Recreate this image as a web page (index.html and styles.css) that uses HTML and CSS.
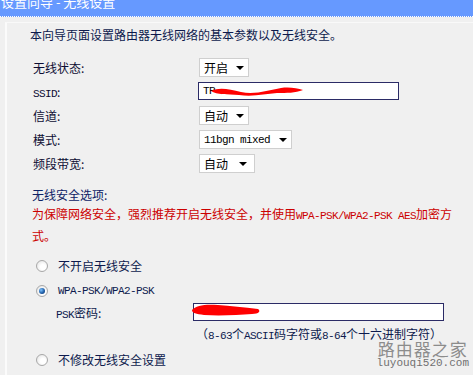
FILE: index.html
```html
<!DOCTYPE html>
<html lang="zh-CN">
<head>
    <meta charset="UTF-8">
    <title>设置向导 - 无线设置</title>
    <link rel="stylesheet" href="styles.css">
</head>
<body>
    <div class="title-bar">
        <div class="title">设置向导 - 无线设置</div>
    </div>

    <div class="panel">
        <p class="intro">本向导页面设置路由器无线网络的基本参数以及无线安全。</p>

        <div class="form-grid">
            <div class="label">无线状态:</div>
            <div><span class="sel w50">开启<i class="arrow"></i></span></div>

            <div class="label"><span class="en">SSID</span>:</div>
            <div>
                <span class="text-input ssid">
                    <span class="en">TP</span>
                    <svg class="scribble ssid-mark" width="96" height="14" viewBox="0 0 96 14">
                        <path d="M2 7 C10 3 20 5 32 8 C46 11 60 6 72 4 C80 3 88 4 94 6 C86 9 78 9 68 9 C56 10 44 13 30 11 C18 10 8 11 2 7 Z" fill="#ff0000"/>
                    </svg>
                </span>
            </div>

            <div class="label">信道:</div>
            <div><span class="sel w50">自动<i class="arrow"></i></span></div>

            <div class="label">模式:</div>
            <div><span class="sel w93"><span class="en">11bgn mixed</span><i class="arrow"></i></span></div>

            <div class="label">频段带宽:</div>
            <div><span class="sel w56">自动<i class="arrow"></i></span></div>
        </div>

        <div class="sec-title">无线安全选项:</div>
        <p class="warn">为保障网络安全，强烈推荐开启无线安全，并使用<span class="en">WPA-PSK/WPA2-PSK AES</span>加密方<br>式。</p>

        <div class="radio-row"><span class="radio"></span>不开启无线安全</div>
        <div class="radio-row"><span class="radio on"></span><span class="en">WPA-PSK/WPA2-PSK</span></div>
        <div class="psk-row">
            <div class="psk-label"><span class="en">PSK</span>密码:</div>
            <span class="text-input psk">
                <svg class="scribble psk-mark" width="72" height="16" viewBox="0 0 72 16">
                    <path d="M2 8 C6 3 16 2 28 3 C40 4 54 5 68 7 C71 9 69 12 62 12 C48 13 30 14 14 13 C6 12 2 11 2 8 Z" fill="#ff0000"/>
                </svg>
            </span>
        </div>
        <div class="hint">（<span class="en">8-63</span>个<span class="en">ASCII</span>码字符或<span class="en">8-64</span>个十六进制字符）</div>
        <div class="radio-row"><span class="radio"></span>不修改无线安全设置</div>

        <div class="watermark">
            <div class="wm-cn">路由器之家</div>
            <div class="wm-en">luyouqi520.com</div>
        </div>
    </div>
</body>
</html>
```

FILE: styles.css
```css
* {
    margin: 0;
    padding: 0;
    box-sizing: border-box;
}

body {
    background: #f0f0f0;
    color: #0d1a4d;
    font-family: 'Noto Sans CJK SC', 'Liberation Sans', sans-serif;
    font-size: 12px;
    width: 473px;
    height: 375px;
    overflow: hidden;
}

.en {
    font-family: 'Liberation Mono', monospace;
    font-size: 11px;
    letter-spacing: -0.6px;
}

.title-bar {
    height: 17px;
    background: #6699ff;
    border-bottom: 1px dotted #ffffff;
    overflow: hidden;
}

.title {
    color: #ffffff;
    font-size: 13px;
    line-height: 14px;
    margin-top: -5px;
    padding-left: 1px;
}

.panel {
    position: relative;
    margin-top: 5px;
    margin-left: 5px;
    height: 353px;
    border-left: 2px solid #fbfbfb;
    border-top: 1px solid #f9f9f9;
    padding-left: 25px;
    padding-top: 3px;
}

.intro {
    margin-left: -2px;
    line-height: 18px;
}

.form-grid {
    display: grid;
    grid-template-columns: 166px auto;
    grid-auto-rows: 24px;
    align-items: center;
    margin-top: 11px;
    margin-left: 1px;
}

.label {
    color: #0d0d33;
}

.sel {
    display: inline-flex;
    align-items: center;
    justify-content: space-between;
    height: 19px;
    background: #ffffff;
    border: 1px solid #cfcfcf;
    padding: 0 4px 0 4px;
    color: #000000;
    vertical-align: middle;
}

.w50 { width: 50px; }
.w56 { width: 56px; padding-right: 7px; }
.w93 { width: 93px; }

.arrow {
    width: 0;
    height: 0;
    border-left: 4px solid transparent;
    border-right: 4px solid transparent;
    border-top: 4px solid #000000;
}

.text-input {
    position: relative;
    display: flex;
    align-items: center;
    background: #ffffff;
    border: 1px solid #2b2b66;
    color: #000000;
    padding-left: 4px;
}

.ssid {
    width: 201px;
    height: 18px;
    margin-left: -1px;
}

.psk {
    width: 251px;
    height: 18px;
}

.scribble {
    position: absolute;
}

.ssid-mark {
    left: 10px;
    top: 1px;
}

.psk-mark {
    left: -4px;
    top: -2px;
}

.sec-title {
    margin-top: 10px;
    line-height: 19px;
    color: #0d2266;
}

.warn {
    color: #cc0000;
    line-height: 19px;
}

.radio-row {
    display: flex;
    align-items: center;
    gap: 10px;
    height: 25px;
    padding-left: 4px;
    color: #0d1a4d;
}

.warn + .radio-row {
    margin-top: 8px;
}

.radio {
    width: 12px;
    height: 12px;
    border-radius: 50%;
    border: 1px solid #a8a8a8;
    background: radial-gradient(circle at 60% 60%, #ffffff 30%, #dedede 100%);
    position: relative;
}

.radio.on::after {
    content: '';
    position: absolute;
    left: 2px;
    top: 2px;
    width: 6px;
    height: 6px;
    border-radius: 50%;
    background: radial-gradient(circle at 35% 35%, #7fc3ff 0%, #1f5fa8 55%, #0c2f66 100%);
}

.psk-row {
    display: flex;
    align-items: center;
    height: 18px;
}

.psk-label {
    width: 161px;
    padding-left: 24px;
    color: #0d1a4d;
}

.hint {
    margin-top: 4px;
    margin-left: 164px;
    line-height: 18px;
    color: #0d1a4d;
}

.hint + .radio-row {
    margin-top: 2px;
}

.watermark {
    position: absolute;
    right: 4px;
    bottom: 6px;
    text-align: center;
    color: #8c8c8c;
}

.wm-cn {
    font-family: 'Noto Sans CJK SC', sans-serif;
    font-size: 17px;
    line-height: 17px;
    letter-spacing: 1px;
}

.wm-en {
    font-family: 'Liberation Mono', monospace;
    font-size: 11px;
    line-height: 12px;
    color: #707070;
}
```
